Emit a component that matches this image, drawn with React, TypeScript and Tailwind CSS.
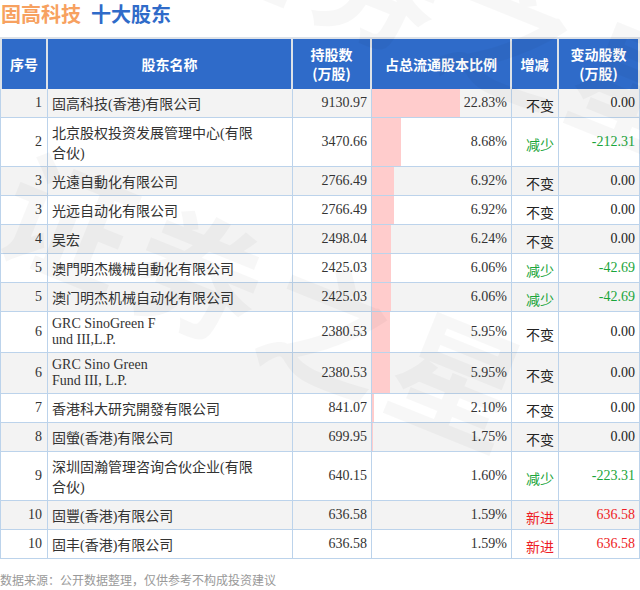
import React from "react";

type Row = {
  rank: string;
  name: string[];
  shares: string;
  pct: number;
  chg: string;
  delta: string;
};

const rows: Row[] = [
  { rank: "1", name: ["固高科技(香港)有限公司"], shares: "9130.97", pct: 22.83, chg: "不变", delta: "0.00" },
  { rank: "2", name: ["北京股权投资发展管理中心(有限", "合伙)"], shares: "3470.66", pct: 8.68, chg: "减少", delta: "-212.31" },
  { rank: "3", name: ["光遠自動化有限公司"], shares: "2766.49", pct: 6.92, chg: "不变", delta: "0.00" },
  { rank: "3", name: ["光远自动化有限公司"], shares: "2766.49", pct: 6.92, chg: "不变", delta: "0.00" },
  { rank: "4", name: ["吴宏"], shares: "2498.04", pct: 6.24, chg: "不变", delta: "0.00" },
  { rank: "5", name: ["澳門明杰機械自動化有限公司"], shares: "2425.03", pct: 6.06, chg: "减少", delta: "-42.69" },
  { rank: "5", name: ["澳门明杰机械自动化有限公司"], shares: "2425.03", pct: 6.06, chg: "减少", delta: "-42.69" },
  { rank: "6", name: ["GRC SinoGreen F", "und III,L.P."], shares: "2380.53", pct: 5.95, chg: "不变", delta: "0.00" },
  { rank: "6", name: ["GRC Sino Green", "Fund III, L.P."], shares: "2380.53", pct: 5.95, chg: "不变", delta: "0.00" },
  { rank: "7", name: ["香港科大研究開發有限公司"], shares: "841.07", pct: 2.1, chg: "不变", delta: "0.00" },
  { rank: "8", name: ["固螢(香港)有限公司"], shares: "699.95", pct: 1.75, chg: "不变", delta: "0.00" },
  { rank: "9", name: ["深圳固瀚管理咨询合伙企业(有限", "合伙)"], shares: "640.15", pct: 1.6, chg: "减少", delta: "-223.31" },
  { rank: "10", name: ["固豐(香港)有限公司"], shares: "636.58", pct: 1.59, chg: "新进", delta: "636.58" },
  { rank: "10", name: ["固丰(香港)有限公司"], shares: "636.58", pct: 1.59, chg: "新进", delta: "636.58" },
];

const MIN = 1.59;
const MAX = 22.83;

function colorFor(chg: string) {
  if (chg === "减少") return "text-[#1aa53a]";
  if (chg === "新进") return "text-[#ee1c25]";
  return "text-[#222]";
}

export default function App() {
  const cjk = { fontFamily: '"Noto Sans CJK SC", "Noto Sans", sans-serif' };
  const body = { fontFamily: '"Liberation Serif", "Noto Sans CJK SC", serif' };
  const th =
    "bg-[#2f6bc9] text-white text-[14px] font-bold text-center align-middle border-t-2 border-r-2 border-[#dde2e8] leading-[19px] p-0";
  const td = "border-b border-r border-[#bcd3eb] px-[4px] py-[4px] align-middle leading-[normal] text-[14px]";
  return (
    <div className="relative w-[640px] h-[590px] bg-white overflow-hidden text-[#333]">
      <div className="h-[37px] flex items-start pl-[1px] text-[20px] font-bold leading-[28px]" style={cjk}>
        <span className="text-[#f7a160]">固高科技</span>
        <span className="text-[#2f6bc9] ml-[10px]">十大股东</span>
      </div>
      <table className="table-fixed border-separate border-spacing-0 w-[640px]">
        <colgroup>
          <col className="w-[48px]" />
          <col className="w-[245px]" />
          <col className="w-[79px]" />
          <col className="w-[140px]" />
          <col className="w-[47px]" />
          <col className="w-[81px]" />
        </colgroup>
        <thead style={cjk}>
          <tr className="h-[52px]">
            <th className={th + " border-l-2"}>序号</th>
            <th className={th}>股东名称</th>
            <th className={th}>
              持股数
              <br />
              (万股)
            </th>
            <th className={th}>占总流通股本比例</th>
            <th className={th}>增减</th>
            <th className={th + " border-r-0"}>
              变动股数
              <br />
              (万股)
            </th>
          </tr>
        </thead>
        <tbody style={body}>
          {rows.map((r, i) => {
            const w = ((r.pct - MIN) / (MAX - MIN)) * 88;
            return (
              <tr key={i} className={i % 2 === 0 ? "bg-[#f3f3f3]" : "bg-white"}>
                <td className={td + " border-l text-right pr-[5px] text-[#333]"}>{r.rank}</td>
                <td className={td + " text-left pl-[4px] text-[#333]"}>
                  {r.name.map((l, j) => (
                    <div key={j}>{l}</div>
                  ))}
                </td>
                <td className={td + " text-right text-[#333]"}>{r.shares}</td>
                <td className={td + " relative text-right text-[#333]"}>
                  <div
                    className="absolute left-0 top-0 bottom-0 bg-[#ffcccc]"
                    style={{ width: `${w}px` }}
                  />
                  <span className="relative">{r.pct.toFixed(2)}%</span>
                </td>
                <td className={td + " text-right " + colorFor(r.chg)}>
                  <span className="relative top-[2px]" style={cjk}>{r.chg}</span>
                </td>
                <td className={td + " text-right " + (r.chg === "不变" ? "text-[#222]" : colorFor(r.chg))}>
                  {r.delta}
                </td>
              </tr>
            );
          })}
        </tbody>
      </table>
      <div className="mt-[12px] text-[12px] text-[#999] leading-[18px]" style={cjk}>
        数据来源：公开数据整理，仅供参考不构成投资建议
      </div>
      <div
        aria-hidden="true"
        className="pointer-events-none absolute left-[-10px] top-[200px] text-[130px] font-bold text-black/[0.03] rotate-[22deg] whitespace-nowrap tracking-[10px]"
        style={cjk}
      >
        证券之星
      </div>
      <div
        aria-hidden="true"
        className="pointer-events-none absolute left-[170px] top-[-90px] text-[130px] font-bold text-black/[0.03] rotate-[22deg] whitespace-nowrap tracking-[10px]"
        style={cjk}
      >
        证券之星
      </div>
    </div>
  );
}
